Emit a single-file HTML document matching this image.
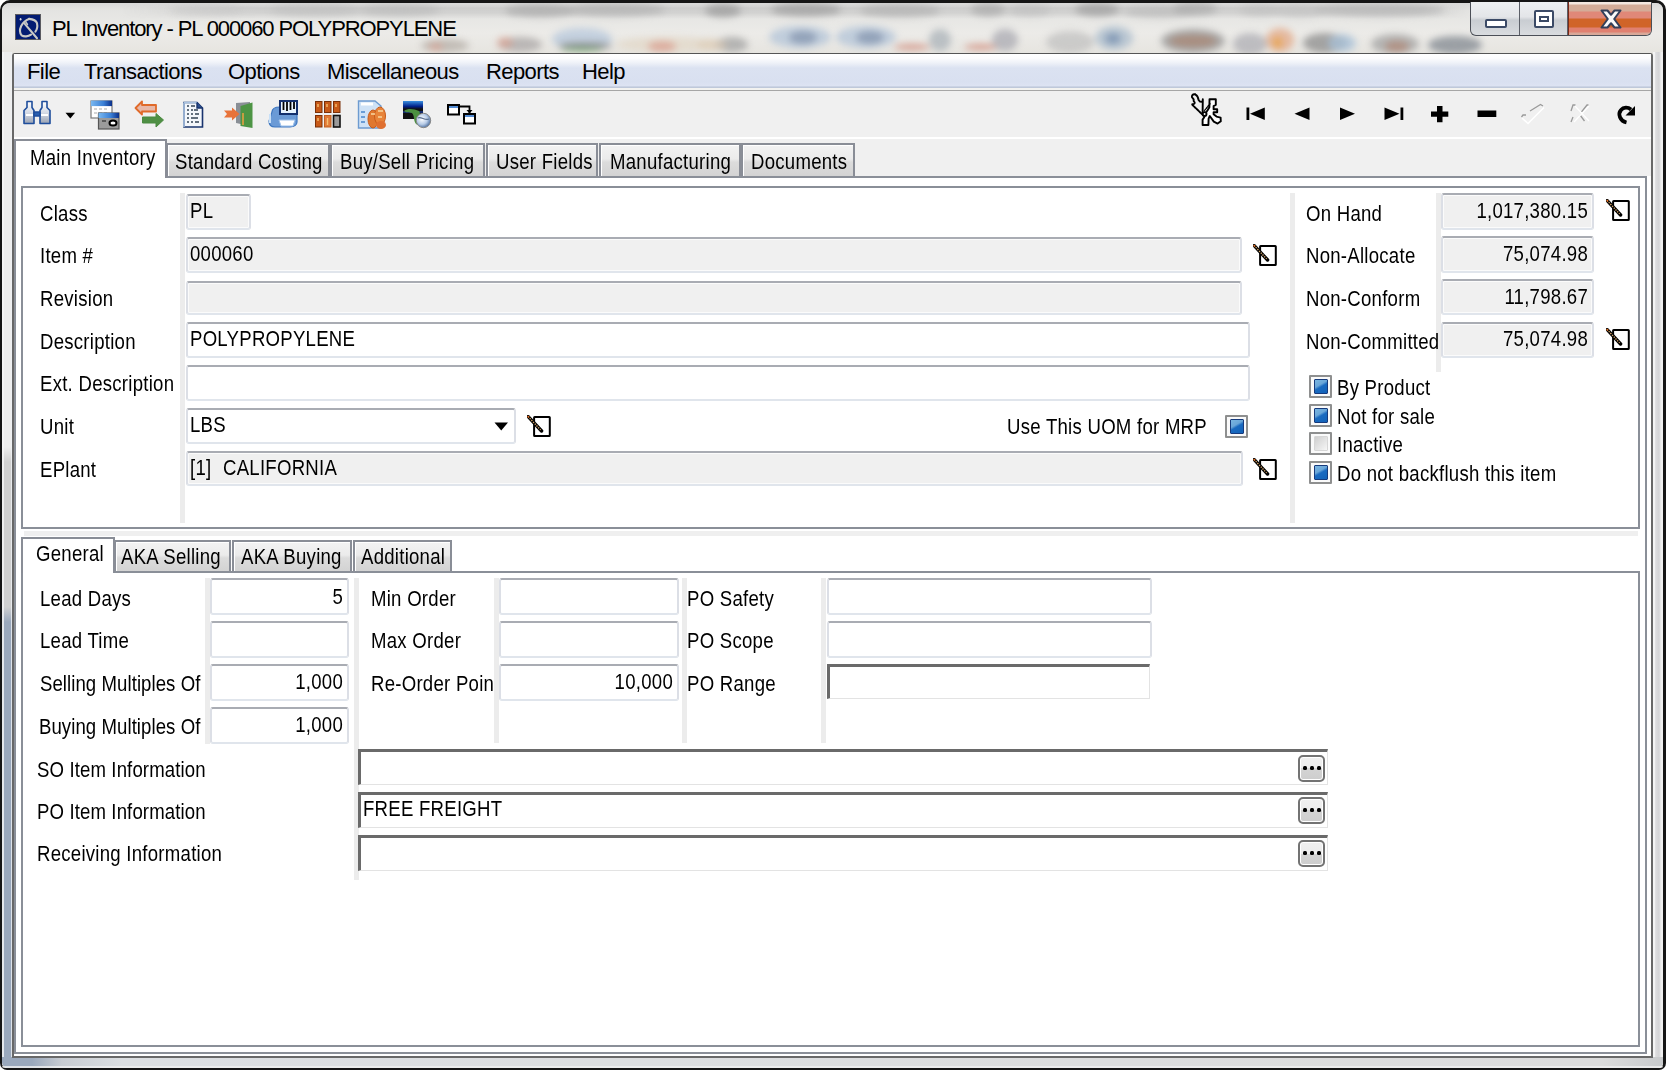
<!DOCTYPE html>
<html><head><meta charset="utf-8">
<style>
*{box-sizing:border-box}
html,body{margin:0;padding:0;width:1666px;height:1070px;overflow:hidden;background:#1a1a1a}
body{position:relative;font-family:"Liberation Sans",sans-serif}
.a{position:absolute}
.t{position:absolute;font-size:22px;line-height:22px;letter-spacing:0.3px;margin-top:-1px;transform:scaleX(0.845);transform-origin:0 0;white-space:nowrap;color:#000}
.r{text-align:right;transform-origin:100% 0}
.box{position:absolute;background:#fff;border-radius:3px;border:2px solid #e0e5ec;border-top-color:#a9acb3;border-left-color:#dcdfe6;border-right-color:#dcdfe6}
.rbox{position:absolute;background:#f0f0f0;border-radius:3px;border:2px solid #e0e5ec;border-top-color:#a9acb3;border-left-color:#dcdfe6;border-right-color:#dcdfe6;box-shadow:inset 0 0 0 1px #fbfbfb}
.sunk{position:absolute;background:#fff;border-style:solid;border-width:3px 1px 1px 3px;border-color:#6a6a6a #e3e3e3 #e3e3e3 #6a6a6a}
.sep{position:absolute;background:#ececec}
.tab{position:absolute;border:2px solid #898d96;border-bottom:none;background:linear-gradient(#f3f3f3 0%,#ebebeb 45%,#dcdcdc 55%,#d3d3d3 100%);box-shadow:inset 1px 1px 0 #fff}
.tabA{position:absolute;border:2px solid #898d96;border-bottom:none;background:#fff}
.cb{position:absolute;width:23px;height:23px;border:2px solid #8e8f8f;border-radius:1px;background:#fafafa;padding:2px 2px 2px 2.5px}
.cb i{display:block;width:100%;height:100%;border:1.5px solid #163a7c;border-radius:1px;background:linear-gradient(150deg,#7ab6e2 0%,#6aa6d8 38%,#1a6ac0 52%,#1262b8 100%)}
.cb.off i{border-color:#d6d6d6;background:linear-gradient(135deg,#cfcfcf,#f6f6f6)}
.menu{position:absolute;font-size:22px;line-height:22px;letter-spacing:-0.6px;white-space:nowrap;color:#000;margin-top:-2px}
</style></head>
<body>
<!-- window frame -->
<div class="a" style="left:0;top:0;width:1666px;height:1070px;background:#fff"></div>
<div class="a" id="frame" style="left:0;top:0;width:1666px;height:1070px;border:3px solid #151515;border-width:3px 3px 2px 2px;border-radius:10px 10px 7px 7px;background:linear-gradient(90deg,#f5f5f5 0px,#f5f5f5 0px,#d2d2d2 2px,#d2d2d2 8px,#efefef 8px,#efefef 10px,#efefef 1651px,#c6c6c9 1652px,#c2c3c6 1657px,#f0f0f0 1658px);overflow:hidden">
  <!-- title glass -->
  <div class="a" style="left:0;top:0;width:1661px;height:52px;background:linear-gradient(#d8d8d8 0px,#e4e4e2 8px,#ecebe8 30px,#e6e4df 52px)"></div>
  <div class="a" style="left:118px;top:1px;width:1350px;height:16px;background:linear-gradient(#fff0 0px,#bdbdbd 4px,#c4c4c4 9px,#fff0 15px);opacity:.55;-webkit-mask-image:linear-gradient(90deg,transparent 0,#000 120px,#000 1300px,transparent 1350px)"></div>
  <div class="a" id="blobs" style="left:418px;top:0px;width:1241px;height:49px;overflow:visible;filter:blur(3.5px)">
<div class="a" style="left:-150px;top:1px;width:90px;height:12px;background:#bdbdbd;opacity:.6;border-radius:50%"></div>
<div class="a" style="left:-60px;top:1px;width:80px;height:12px;background:#b8b8b8;opacity:.6;border-radius:50%"></div>
<div class="a" style="left:-250px;top:2px;width:70px;height:10px;background:#c4c4c4;opacity:.5;border-radius:50%"></div>
<div class="a" style="left:85.0px;top:0.5px;width:70px;height:13px;background:#a8a8a8;opacity:0.68;border-radius:50%"></div>
<div class="a" style="left:145.0px;top:-0.5px;width:100px;height:13px;background:#b0b0b0;opacity:0.68;border-radius:50%"></div>
<div class="a" style="left:285.0px;top:0.5px;width:36px;height:13px;background:#9c9c9c;opacity:0.77;border-radius:50%"></div>
<div class="a" style="left:351.0px;top:-0.5px;width:70px;height:13px;background:#a0a0a0;opacity:0.77;border-radius:50%"></div>
<div class="a" style="left:440.0px;top:0.5px;width:80px;height:13px;background:#b0b0b0;opacity:0.68;border-radius:50%"></div>
<div class="a" style="left:551.0px;top:-0.5px;width:34px;height:13px;background:#a8a8a8;opacity:0.68;border-radius:50%"></div>
<div class="a" style="left:655.0px;top:-0.5px;width:44px;height:13px;background:#a0a0a0;opacity:0.77;border-radius:50%"></div>
<div class="a" style="left:705.0px;top:3.0px;width:70px;height:12px;background:#b8b8b8;opacity:0.59;border-radius:50%"></div>
<div class="a" style="left:753.0px;top:-1.5px;width:44px;height:13px;background:#a8a8a8;opacity:0.68;border-radius:50%"></div>
<div class="a" style="left:855.0px;top:0.5px;width:50px;height:13px;background:#c0c0c0;opacity:0.59;border-radius:50%"></div>
<div class="a" style="left:895.0px;top:-0.5px;width:130px;height:13px;background:#b4b4b4;opacity:0.68;border-radius:50%"></div>
<div class="a" style="left:590.0px;top:1.0px;width:40px;height:12px;background:#bdbdbd;opacity:0.59;border-radius:50%"></div>
<div class="a" style="left:820.0px;top:1.0px;width:40px;height:12px;background:#bbbbbb;opacity:0.51;border-radius:50%"></div>
<div class="a" style="left:1.0px;top:35.5px;width:48px;height:13px;background:#b0a8a0;opacity:0.68;border-radius:50%"></div>
<div class="a" style="left:9.0px;top:40.0px;width:14px;height:8px;background:#d8a090;opacity:0.68;border-radius:50%"></div>
<div class="a" style="left:78.0px;top:33.5px;width:44px;height:15px;background:#a8a4a4;opacity:0.72;border-radius:50%"></div>
<div class="a" style="left:77.0px;top:33.5px;width:16px;height:11px;background:#d8a090;opacity:0.68;border-radius:50%"></div>
<div class="a" style="left:132.0px;top:25.0px;width:60px;height:22px;background:#b8c8dc;opacity:0.77;border-radius:50%"></div>
<div class="a" style="left:138.0px;top:39.0px;width:54px;height:8px;background:#858585;opacity:0.72;border-radius:50%"></div>
<div class="a" style="left:141.0px;top:45.0px;width:42px;height:3px;background:#4a9a40;opacity:0.77;border-radius:50%"></div>
<div class="a" style="left:196.0px;top:33.5px;width:104px;height:15px;background:#e2d6c4;opacity:0.68;border-radius:50%"></div>
<div class="a" style="left:228.0px;top:37.5px;width:28px;height:11px;background:#d89888;opacity:0.68;border-radius:50%"></div>
<div class="a" style="left:296.0px;top:33.5px;width:32px;height:15px;background:#a0a0a0;opacity:0.72;border-radius:50%"></div>
<div class="a" style="left:277.0px;top:36.0px;width:30px;height:12px;background:#dcc8b0;opacity:0.59;border-radius:50%"></div>
<div class="a" style="left:349.0px;top:23.0px;width:62px;height:22px;background:#b4c4d8;opacity:0.77;border-radius:50%"></div>
<div class="a" style="left:369.0px;top:27.5px;width:28px;height:13px;background:#8494ae;opacity:0.77;border-radius:50%"></div>
<div class="a" style="left:416.0px;top:23.0px;width:60px;height:22px;background:#b4c4d8;opacity:0.77;border-radius:50%"></div>
<div class="a" style="left:436.0px;top:27.5px;width:28px;height:13px;background:#8494ae;opacity:0.77;border-radius:50%"></div>
<div class="a" style="left:474.0px;top:41.0px;width:36px;height:6px;background:#d08878;opacity:0.77;border-radius:50%"></div>
<div class="a" style="left:509.0px;top:26.0px;width:22px;height:22px;background:#a4acb4;opacity:0.68;border-radius:50%"></div>
<div class="a" style="left:544.0px;top:41.0px;width:34px;height:6px;background:#d08878;opacity:0.77;border-radius:50%"></div>
<div class="a" style="left:572.0px;top:26.0px;width:26px;height:22px;background:#a4a4ac;opacity:0.68;border-radius:50%"></div>
<div class="a" style="left:626.0px;top:28.0px;width:48px;height:22px;background:#bcbcbc;opacity:0.68;border-radius:50%"></div>
<div class="a" style="left:675.0px;top:23.0px;width:38px;height:24px;background:#acbccc;opacity:0.77;border-radius:50%"></div>
<div class="a" style="left:685.0px;top:29.5px;width:16px;height:11px;background:#7890b0;opacity:0.77;border-radius:50%"></div>
<div class="a" style="left:741.0px;top:26.0px;width:64px;height:24px;background:#959595;opacity:0.77;border-radius:50%"></div>
<div class="a" style="left:749.0px;top:32.0px;width:48px;height:12px;background:#a88878;opacity:0.85;border-radius:50%"></div>
<div class="a" style="left:813.0px;top:30.0px;width:34px;height:22px;background:#a8a8b0;opacity:0.68;border-radius:50%"></div>
<div class="a" style="left:846.0px;top:25.0px;width:28px;height:24px;background:#e2aa8a;opacity:0.77;border-radius:50%"></div>
<div class="a" style="left:852.5px;top:33.5px;width:9px;height:11px;background:#e8a040;opacity:0.77;border-radius:50%"></div>
<div class="a" style="left:883.0px;top:30.0px;width:44px;height:20px;background:#8e8e8e;opacity:0.77;border-radius:50%"></div>
<div class="a" style="left:908.0px;top:31.0px;width:28px;height:18px;background:#a8c0d8;opacity:0.77;border-radius:50%"></div>
<div class="a" style="left:951.0px;top:31.0px;width:48px;height:20px;background:#a0a0a0;opacity:0.72;border-radius:50%"></div>
<div class="a" style="left:965.0px;top:37.5px;width:24px;height:11px;background:#b08878;opacity:0.77;border-radius:50%"></div>
<div class="a" style="left:1008.0px;top:33.0px;width:54px;height:18px;background:#838a92;opacity:0.77;border-radius:50%"></div>
</div>
  <div class="a" style="left:0;top:1054px;width:1661px;height:14px;background:linear-gradient(#f2f2f2 0,#f2f2f2 2px,#dcdcdc 3px,#d8d8d8 10px,#f2f2f2 12px)"></div>
</div>
<!-- frame side glass -->
<div class="a" style="left:2px;top:52px;width:10px;height:1005px;background:linear-gradient(#eeeeee 0px,#eeeeee 395px,#d0d0d0 410px,#d0d0d0 555px,#9aa8bc 570px,#9aa8bc 1005px)"></div>
<div class="a" style="left:2px;top:52px;width:1.5px;height:1005px;background:#f6f6f6;opacity:.8"></div>
<div class="a" style="left:10.5px;top:52px;width:1.5px;height:1005px;background:#eef0f3;opacity:.8"></div>
<div class="a" style="left:1653px;top:52px;width:10px;height:1005px;background:linear-gradient(90deg,#f6f6f6 0px,#dcdcde 3px,#d4d4d6 6px,#ececec 8px)"></div>
<div class="a" style="left:1653px;top:52px;width:1.5px;height:1005px;background:#f4f4f4"></div>
<div class="a" style="left:1661px;top:52px;width:2px;height:1005px;background:#efefef"></div>
<div class="a" style="left:2px;top:1057px;width:1661px;height:11px;border-radius:0 0 6px 6px;background:linear-gradient(90deg,#9aa8bc 0px,#9aa8bc 30px,#c8ccd2 60px,#dcdfe2 120px,#dcdcdc 1600px,#c8cacc 1661px)"></div>
<div class="a" style="left:2px;top:1066px;width:1661px;height:2px;border-radius:0 0 6px 6px;background:#f0f0f0;opacity:.8"></div>
<!-- title icon -->
<div class="a" style="left:15px;top:14px;width:26px;height:26px;background:#031c72;border:1px solid #5a5a60"></div>
<svg class="a" style="left:15.5px;top:14.5px" width="25" height="25" viewBox="0 0 25 25"><g fill="none" stroke="#c9c9c6" stroke-width="2.1" stroke-linecap="round"><path d="M13 3.9 C16.5 4.2 20 5.2 21 8.2 C21.6 11 21.4 14 19.4 16.6"/><path d="M13 3.9 C10 5 6.8 7.8 5.2 11 C3.7 14.2 3.6 18 5.6 20.4 C8 22 12.2 21.6 15 19.6"/><path d="M8.6 8.6 L21 23.3"/><path d="M9.5 6.5 L11.5 9.5" stroke-width="1.4"/></g><ellipse cx="4.6" cy="4.3" rx="0.9" ry="1.3" fill="#d8d8d8"/></svg>
<div class="t" style="left:52px;top:19px;font-size:22px;letter-spacing:-1.1px;transform:none">PL Inventory - PL 000060 POLYPROPYLENE</div>

<!-- caption buttons -->
<div class="a" style="left:1470px;top:2px;width:182px;height:34px;border:1px solid #4b4f57;border-top:none;border-radius:0 0 6px 6px;overflow:hidden;background:linear-gradient(#eef0f2 0%,#e3e5e8 45%,#c9cdd2 55%,#d9dcdf 100%)">
  <div class="a" style="left:48px;top:0;width:1px;height:34px;background:#5c6068"></div>
  <div class="a" style="left:96px;top:0;width:1px;height:34px;background:#5c6068"></div>
  <div class="a" style="left:97px;top:0;width:85px;height:34px;background:linear-gradient(#f4e8e0 0px,#f4e8e0 2px,#d4ac98 3px,#d4ac98 9px,#e08878 10px,#e08878 16px,#d06428 17px,#d06428 25px,#e08070 26px,#e08070 30px,#d8a898 31px);border-left:1.5px solid #7a2a18"></div>
</div>
<div class="a" style="left:1485px;top:19px;width:22px;height:9px;background:#fff;border:2px solid #3b4a66;border-radius:2px"></div>
<div class="a" style="left:1534px;top:10px;width:20px;height:18px;background:#fff;border:2px solid #3b4a66;border-radius:2px"><div class="a" style="left:3px;top:4px;width:10px;height:6px;border:2px solid #3b4a66"></div></div>
<svg class="a" style="left:1598px;top:8px" width="26" height="22" viewBox="-3 -2 26 22"><path d="M0.5 0.5 H6.5 L10 4.8 L13.5 0.5 H19.5 L13.2 9 L19.5 17.5 H13.5 L10 13.2 L6.5 17.5 H0.5 L6.8 9 Z" fill="#fafafa" stroke="#33405a" stroke-width="2" stroke-linejoin="round"/></svg>

<!-- client area -->
<div class="a" style="left:12px;top:52.5px;width:1641px;height:1005.5px;border:2px solid #686868;border-top-color:#555;border-top-width:1.5px;border-radius:3px 3px 0 0;background:#f0f0f0"></div>
<!-- menubar -->
<div class="a" style="left:14px;top:54px;width:1637px;height:34px;background:linear-gradient(#fff 0px,#fdfdfe 4px,#eef1f8 9px,#dbe2f1 14px,#d9e0f0 28px,#dde3f2 32px,#b9c3d6 33px,#c4cddd 34px)"></div>
<div class="a" style="left:14px;top:88px;width:1637px;height:4px;background:linear-gradient(#f2f2f0 0,#f2f2f0 2px,#a6a6a6 2px,#a6a6a6 3.5px,#f0f0f0 3.5px)"></div>
<div class="menu" style="left:27px;top:63px">File</div>
<div class="menu" style="left:84px;top:63px">Transactions</div>
<div class="menu" style="left:228px;top:63px">Options</div>
<div class="menu" style="left:327px;top:63px">Miscellaneous</div>
<div class="menu" style="left:486px;top:63px">Reports</div>
<div class="menu" style="left:582px;top:63px">Help</div>
<!-- toolbar -->
<div class="a" style="left:14px;top:91px;width:1637px;height:46px;background:#f0f0f0"></div>
<div class="a" style="left:14px;top:137px;width:1637px;height:1.5px;background:#fff"></div>

<svg class="a" style="left:0;top:0" width="1666" height="140" viewBox="0 0 1666 140">
<defs>
<linearGradient id="gb" x1="0" y1="0" x2="0" y2="1"><stop offset="0" stop-color="#fff"/><stop offset=".5" stop-color="#d5dbe6"/><stop offset="1" stop-color="#9aa3b3"/></linearGradient>
<linearGradient id="tbar" x1="0" y1="0" x2="1" y2="0"><stop offset="0" stop-color="#7ab8f0"/><stop offset=".6" stop-color="#3a7fd5"/><stop offset="1" stop-color="#0a2f8a"/></linearGradient>
<linearGradient id="dkw" x1="0" y1="0" x2="0" y2="1"><stop offset="0" stop-color="#3a90e0"/><stop offset=".3" stop-color="#00208a"/><stop offset=".45" stop-color="#111"/><stop offset="1" stop-color="#111"/></linearGradient>
<radialGradient id="globe" cx=".4" cy=".4" r=".6"><stop offset="0" stop-color="#fff"/><stop offset=".6" stop-color="#b9cde8"/><stop offset="1" stop-color="#5a7aa8"/></radialGradient>
</defs>
<!-- binoculars -->
<g stroke="#1f4e9c" stroke-width="1.6" stroke-linejoin="round">
<path d="M27 101.5 h5 v6 l2 3 v13 h-10 v-13 l3 -3 z" fill="url(#gb)"/>
<path d="M42 101.5 h5 v6 l3 3 v13 h-10 v-13 l2 -3 z" fill="url(#gb)"/>
<path d="M34 112 h6 v4 h-6 z" fill="#2a5fb0"/>
</g>
<path d="M26 115 h7 M41 115 h7" stroke="#fff" stroke-width="2"/>
<path d="M65.5 112.8 h9.6 l-4.8 5.6 z" fill="#000"/>
<!-- windows icon -->
<rect x="91" y="101" width="21" height="17" fill="#fff" stroke="#7a7a7a" stroke-width="1.2"/>
<rect x="91" y="100.6" width="21" height="5.5" fill="url(#tbar)"/>
<path d="M94 109 h3 M99 109 h3 M104 109 h3 M94 113 h3 M99 113 h3 M104 113 h3" stroke="#aaa" stroke-width="1.2"/>
<rect x="98.5" y="113" width="20.5" height="16" fill="#9b9b9b" stroke="#555" stroke-width="1.2"/>
<rect x="98.5" y="112.8" width="20.5" height="5.2" fill="url(#tbar)"/>
<ellipse cx="113" cy="123" rx="3.5" ry="2.5" fill="#fff" stroke="#000" stroke-width="2"/>
<path d="M102 121 h4" stroke="#444" stroke-width="1.5"/>
<!-- arrows -->
<path d="M135.5 108 L142 101.5 V105 H156 V111.5 H142 V114.5 Z" fill="#e8b8a8" stroke="#e06a2a" stroke-width="1.8" stroke-linejoin="round"/>
<path d="M163.5 120 L156 113.5 V117 H142.5 V123 H156 V127 Z" fill="#4f8f44" stroke="#4a8a40" stroke-width="1"/>
<!-- document -->
<path d="M184 102.5 H197 L202.5 108 V127 H184 Z" fill="#f4f7fb" stroke="#19346e" stroke-width="1.6"/>
<path d="M184 102.5 H197 M184 102.5 V127" stroke="#a9c2e0" stroke-width="1.6"/>
<path d="M197 102.5 V108 H202.5" fill="#2c4f8f" stroke="#19346e" stroke-width="1.4"/>
<path d="M187 106 h2 M191 106 h4 M187 110 h2 M191 110 h2 M194 110 h4 M187 114 h2 M191 114 h2 M195 114 h4 M187 118 h2 M191 118 h7 M187 122 h2 M191 122 h2 M195 122 h4" stroke="#345" stroke-width="1.3"/>
<!-- door -->
<path d="M236 103 L250 102 V126 L236 123 Z" fill="#8a8f96"/>
<path d="M240.5 106 L252.5 102.5 V128 L240.5 126 Z" fill="#4d9444"/>
<path d="M243 113 V125" stroke="#f0a040" stroke-width="1.5"/>
<path d="M224 110.5 H232 V107.5 L239.5 114 L232 120.5 V117.5 H224 L227 114 Z" fill="#e8733a"/>
<!-- printer -->
<path d="M272 112 C272 108 276 107 280 107 H292 C296 107 297 110 297 114 V122 C297 125 294 127 290 127 H275 C271 127 269 125 269 121 Z" fill="#6a9ad6" stroke="#3e77c0" stroke-width="1.2"/>
<path d="M270 114 V123" stroke="#c8e0f8" stroke-width="2"/>
<rect x="280" y="101" width="17" height="13" fill="#e8f4ff" stroke="#13306e" stroke-width="2"/>
<path d="M283.5 102 V110 M287 102 V111 M290.5 102 V110 M294 102 V109" stroke="#000" stroke-width="1.8"/>
<path d="M279 120 H295 L293 126 H281 Z" fill="#fff" stroke="#9cc0ea" stroke-width="1"/>
<!-- grid -->
<g stroke="#7a3008" stroke-width="1">
<rect x="315.5" y="101.5" width="6.5" height="11" fill="#c85a18"/>
<rect x="324.5" y="101.5" width="6.5" height="11" fill="#c85a18"/>
<rect x="333.5" y="101.5" width="6.5" height="11" fill="#c85a18"/>
<rect x="315.5" y="115.5" width="6.5" height="11.5" fill="#c85a18"/>
<rect x="324.5" y="115.5" width="6.5" height="11.5" fill="#e27a38" stroke="#c06020"/>
<rect x="333.5" y="115.5" width="6.5" height="11.5" fill="#9a9a9a" stroke="#111" stroke-width="1.6"/>
</g>
<path d="M318 104 v3 M327 104 v3 M336 104 v3 M318 118 v3 M327.5 118 v7" stroke="#f5c070" stroke-width="1.4"/>
<!-- report with coins -->
<path d="M358.5 101 H375 L381 106 V128 H358.5 Z" fill="#cfe2f6" stroke="#6d9bd0" stroke-width="1.4"/>
<path d="M361 104 H373" stroke="#fff" stroke-width="3"/>
<path d="M361 112 h4 M361 117 h4 M361 122 h4" stroke="#4a86cc" stroke-width="1.4"/>
<ellipse cx="373" cy="119" rx="5" ry="9" fill="#e07830" stroke="#c85a18" stroke-width="1"/>
<ellipse cx="380" cy="116" rx="5.5" ry="9" fill="#e8843a" stroke="#c85a18" stroke-width="1"/>
<ellipse cx="381" cy="125" rx="5" ry="4" fill="#e07030"/>
<path d="M371 114 h4 M378 111 h5 M378 117 h4" stroke="#f8d8a0" stroke-width="1.4"/>
<!-- dark window + globe -->
<rect x="403" y="101" width="20" height="18" fill="url(#dkw)"/>
<path d="M403 112 h20" stroke="#1a3ea8" stroke-width="1.2"/>
<path d="M404 111 C408 108 414 109 419 111 C421 113 419 116 420 121 C421 124 418 126 416 124 C413 120 415 116 412 113 C409 112 406 113 404 111 Z" fill="#4c9040"/>
<circle cx="423.5" cy="120.5" r="7.2" fill="url(#globe)" stroke="#888" stroke-width="1"/>
<path d="M418 118 C421 116 425 121 429 119" stroke="#5a6f8f" stroke-width="1.2" fill="none"/>
<!-- linked windows -->
<rect x="448" y="105" width="11" height="9.5" fill="#fff" stroke="#000" stroke-width="2"/>
<path d="M449 107 h9" stroke="#2a70c8" stroke-width="1.6"/>
<path d="M459 106.5 H469.5 V113" stroke="#000" stroke-width="1.8" fill="none"/>
<path d="M466.5 110 h6 l-3 3.5 z" fill="#000"/>
<rect x="464" y="114" width="11" height="9.5" fill="#fff" stroke="#000" stroke-width="2"/>
<path d="M465 116 h9" stroke="#2a70c8" stroke-width="1.6"/>
<!-- wand/figure -->
<g fill="none" stroke="#000" stroke-width="1.9" stroke-linejoin="round" stroke-linecap="round">
<path d="M1195 94.3 C1192.5 94 1191.5 95.5 1192 97.3 C1193.5 98.5 1194 99.8 1193.7 101.3 C1195.5 102.5 1195 104.3 1192.3 104.3"/>
<path d="M1192.5 105 L1204 116" stroke-dasharray="1.6 0.7"/>
<path d="M1195.5 94.6 C1197.5 95.5 1198.2 98 1198.6 100 L1199.8 101.5 L1202.2 101.8"/>
<path d="M1202.8 99.3 L1202.6 113.5"/>
<path d="M1209.5 99.3 H1215.8 V104.8 L1213.6 106 V109.2 H1217.2 V112.3 H1213.6 V114.3 L1216.5 116.6 L1220.6 117.6 L1220.8 121.2 L1217.6 123.6 L1213.8 121.6 L1209.8 116 L1208.6 118.6 L1208.4 125 H1202.6 V119.6 L1204.2 117.2 L1205.2 113.8 L1207.6 110.2 L1209.4 107.2 Z" fill="#fff"/>
<path d="M1210 103.8 L1204.3 110.8" stroke-width="1.3" stroke-dasharray="1.3 0.9"/>
<circle cx="1204.6" cy="114" r="1.9" fill="#fff"/>
</g>
<!-- nav -->
<path d="M1246.5 107.5 h2.8 v12.5 h-2.8 z M1250 113.8 L1264.8 107.5 V120 Z" fill="#000"/>
<path d="M1294.5 113.8 L1309.5 107.5 V120 Z" fill="#000"/>
<path d="M1355 113.8 L1340 107.5 V120 Z" fill="#000"/>
<path d="M1400.5 107.5 h2.8 v12.5 h-2.8 z M1399.5 113.8 L1384.5 107.5 V120 Z" fill="#000"/>
<path d="M1437 106 h5.5 v5.5 h5.8 v5.2 h-5.8 v5.5 h-5.5 v-5.5 h-6 v-5.2 h6 z" fill="#000"/>
<rect x="1477.5" y="110.5" width="18.8" height="6.5" fill="#000"/>
<path d="M1521.5 117 L1523 115 L1526 115 M1530 111 L1540.5 104.5 L1543 106" stroke="#9a9a9a" stroke-width="1.3" fill="none"/>
<path d="M1522 118 L1528 123.5 L1544 107.5" stroke="#fff" stroke-width="1.5" fill="none"/>
<path d="M1571 111 L1573 105 L1575.5 105 M1581.5 112 L1587 105 L1588.5 105 M1571 122 L1573 117 M1580 115 L1584.5 121" stroke="#9a9a9a" stroke-width="1.3" fill="none"/>
<path d="M1575 106 L1589 121 M1589 106 L1574 122" stroke="#fff" stroke-width="1.2" fill="none"/>
<path d="M1626.5 122.5 C1620 121 1617.5 114 1621 110 C1623.5 107 1628 107 1631 109.5" stroke="#000" stroke-width="3.8" fill="none"/>
<path d="M1635 106 V115.5 H1625.5 Z" fill="#000"/>
</svg>


<!-- main tab control -->
<div class="a" style="left:14px;top:176px;width:1637px;height:880px;background:#fff"></div>
<div class="a" style="left:14px;top:176px;width:1633px;height:878px;border:2px solid #8a8f98;background:#fff"></div>

<!-- top tabs -->
<div class="tab" style="left:166px;top:143px;width:164px;height:33px"></div>
<div class="tab" style="left:330px;top:143px;width:155px;height:33px"></div>
<div class="tab" style="left:486px;top:143px;width:112px;height:33px"></div>
<div class="tab" style="left:599px;top:143px;width:142px;height:33px"></div>
<div class="tab" style="left:741px;top:143px;width:114px;height:33px"></div>
<div class="tabA" style="left:14px;top:139px;width:153px;height:39px"></div>
<div class="t" style="left:30px;top:148px">Main Inventory</div>
<div class="t" style="left:175px;top:152px">Standard Costing</div>
<div class="t" style="left:340px;top:152px">Buy/Sell Pricing</div>
<div class="t" style="left:496px;top:152px">User Fields</div>
<div class="t" style="left:610px;top:152px">Manufacturing</div>
<div class="t" style="left:751px;top:152px">Documents</div>


<!-- upper panel -->
<div class="a" style="left:21px;top:186px;width:1619px;height:343px;border:2px solid #8a8f98;background:#fff"></div>
<div class="a" style="left:24px;top:531px;width:1614px;height:5px;background:#efefef"></div>
<div class="sep" style="left:180px;top:193px;width:5px;height:330px"></div>
<div class="sep" style="left:1290px;top:193px;width:5px;height:330px"></div>
<div class="sep" style="left:1436px;top:193px;width:5px;height:179px"></div>
<div class="t" style="left:40px;top:203.5px">Class</div>
<div class="t" style="left:40px;top:246px">Item #</div>
<div class="t" style="left:40px;top:289px">Revision</div>
<div class="t" style="left:40px;top:331.5px">Description</div>
<div class="t" style="left:40px;top:374px">Ext. Description</div>
<div class="t" style="left:40px;top:417px">Unit</div>
<div class="t" style="left:40px;top:460px">EPlant</div>
<div class="rbox" style="left:186px;top:194px;width:65px;height:36px"></div>
<div class="rbox" style="left:186px;top:237px;width:1056px;height:36px"></div>
<div class="rbox" style="left:186px;top:281px;width:1056px;height:34px"></div>
<div class="box" style="left:186px;top:322px;width:1064px;height:36px"></div>
<div class="box" style="left:186px;top:365px;width:1064px;height:36px"></div>
<div class="box" style="left:186px;top:408px;width:330px;height:36px"></div>
<div class="rbox" style="left:186px;top:451px;width:1057px;height:35px"></div>
<div class="t" style="left:190px;top:201px">PL</div>
<div class="t" style="left:190px;top:243.5px">000060</div>
<div class="t" style="left:190px;top:329px">POLYPROPYLENE</div>
<div class="t" style="left:190px;top:414.5px">LBS</div>
<div class="t" style="left:190px;top:457.5px">[1]</div><div class="t" style="left:223px;top:457.5px">CALIFORNIA</div>
<svg class="a" style="left:494px;top:422px" width="15" height="9" viewBox="0 0 15 9"><path d="M0.5 0.5 H14 L7.25 8.5 Z" fill="#000"/></svg>
<svg class="a" style="left:1253px;top:244px" width="25" height="24" viewBox="0 0 25 24"><rect x="7.1" y="2" width="15.7" height="19.1" rx="0.6" fill="none" stroke="#000" stroke-width="2"/><path d="M1.2 1.6 L14.6 16" stroke="#000" stroke-width="3.4" stroke-linecap="round"/><path d="M1 1.4 L13.6 14.9" stroke="#dca868" stroke-width="1.3" stroke-dasharray="1.3 1.2"/><circle cx="1.4" cy="1.7" r="1" fill="#e06a20"/></svg>
<svg class="a" style="left:1253px;top:458px" width="25" height="24" viewBox="0 0 25 24"><rect x="7.1" y="2" width="15.7" height="19.1" rx="0.6" fill="none" stroke="#000" stroke-width="2"/><path d="M1.2 1.6 L14.6 16" stroke="#000" stroke-width="3.4" stroke-linecap="round"/><path d="M1 1.4 L13.6 14.9" stroke="#dca868" stroke-width="1.3" stroke-dasharray="1.3 1.2"/><circle cx="1.4" cy="1.7" r="1" fill="#e06a20"/></svg>
<svg class="a" style="left:527px;top:415px" width="25" height="24" viewBox="0 0 25 24"><rect x="7.1" y="2" width="15.7" height="19.1" rx="0.6" fill="none" stroke="#000" stroke-width="2"/><path d="M1.2 1.6 L14.6 16" stroke="#000" stroke-width="3.4" stroke-linecap="round"/><path d="M1 1.4 L13.6 14.9" stroke="#dca868" stroke-width="1.3" stroke-dasharray="1.3 1.2"/><circle cx="1.4" cy="1.7" r="1" fill="#e06a20"/></svg>
<div class="t" style="left:1007px;top:417px">Use This UOM for MRP</div>
<div class="cb" style="left:1225px;top:415px"><i></i></div>
<div class="t" style="left:1306px;top:203.5px">On Hand</div>
<div class="t" style="left:1306px;top:246px">Non-Allocate</div>
<div class="t" style="left:1306px;top:289px">Non-Conform</div>
<div class="t" style="left:1306px;top:331.5px">Non-Committed</div>
<div class="rbox" style="left:1441px;top:193px;width:153px;height:37px"></div>
<div class="rbox" style="left:1441px;top:236px;width:153px;height:37px"></div>
<div class="rbox" style="left:1441px;top:279px;width:153px;height:36px"></div>
<div class="rbox" style="left:1441px;top:322px;width:153px;height:36px"></div>
<div class="t r" style="left:1400px;width:188px;top:201px">1,017,380.15</div>
<div class="t r" style="left:1400px;width:188px;top:243.5px">75,074.98</div>
<div class="t r" style="left:1400px;width:188px;top:286.5px">11,798.67</div>
<div class="t r" style="left:1400px;width:188px;top:329px">75,074.98</div>
<svg class="a" style="left:1606px;top:199px" width="25" height="24" viewBox="0 0 25 24"><rect x="7.1" y="2" width="15.7" height="19.1" rx="0.6" fill="none" stroke="#000" stroke-width="2"/><path d="M1.2 1.6 L14.6 16" stroke="#000" stroke-width="3.4" stroke-linecap="round"/><path d="M1 1.4 L13.6 14.9" stroke="#dca868" stroke-width="1.3" stroke-dasharray="1.3 1.2"/><circle cx="1.4" cy="1.7" r="1" fill="#e06a20"/></svg>
<svg class="a" style="left:1606px;top:328px" width="25" height="24" viewBox="0 0 25 24"><rect x="7.1" y="2" width="15.7" height="19.1" rx="0.6" fill="none" stroke="#000" stroke-width="2"/><path d="M1.2 1.6 L14.6 16" stroke="#000" stroke-width="3.4" stroke-linecap="round"/><path d="M1 1.4 L13.6 14.9" stroke="#dca868" stroke-width="1.3" stroke-dasharray="1.3 1.2"/><circle cx="1.4" cy="1.7" r="1" fill="#e06a20"/></svg>
<div class="cb" style="left:1309px;top:375px"><i></i></div>
<div class="cb" style="left:1309px;top:404px"><i></i></div>
<div class="cb off" style="left:1309px;top:432px"><i></i></div>
<div class="cb" style="left:1309px;top:461px"><i></i></div>
<div class="t" style="left:1337px;top:378px">By Product</div>
<div class="t" style="left:1337px;top:406.7px">Not for sale</div>
<div class="t" style="left:1337px;top:435.4px">Inactive</div>
<div class="t" style="left:1337px;top:464px">Do not backflush this item</div>


<!-- lower tab control -->
<div class="a" style="left:21px;top:571px;width:1619px;height:476px;border:2px solid #8a8f98;background:#fff"></div>
<div class="tab" style="left:114px;top:540px;width:117px;height:31px"></div>
<div class="tab" style="left:232px;top:540px;width:120px;height:31px"></div>
<div class="tab" style="left:353px;top:540px;width:99px;height:31px"></div>
<div class="tabA" style="left:21px;top:537px;width:94px;height:36px"></div>
<div class="t" style="left:36px;top:544px">General</div>
<div class="t" style="left:121px;top:547.3px">AKA Selling</div>
<div class="t" style="left:241px;top:547.3px">AKA Buying</div>
<div class="t" style="left:361px;top:547.3px">Additional</div>
<div class="sep" style="left:205px;top:578px;width:5px;height:166px"></div>
<div class="sep" style="left:354px;top:578px;width:5px;height:302px"></div>
<div class="sep" style="left:494px;top:578px;width:5px;height:165px"></div>
<div class="sep" style="left:682px;top:578px;width:5px;height:165px"></div>
<div class="sep" style="left:821px;top:578px;width:5px;height:165px"></div>
<div class="t" style="left:40px;top:588.5px">Lead Days</div>
<div class="t" style="left:40px;top:631px">Lead Time</div>
<div class="t" style="left:40px;top:673.5px;letter-spacing:0.08px">Selling Multiples Of</div>
<div class="t" style="left:38.5px;top:716.5px;letter-spacing:0.08px">Buying Multiples Of</div>
<div class="box" style="left:210px;top:578px;width:139px;height:37px"></div>
<div class="box" style="left:210px;top:621px;width:139px;height:37px"></div>
<div class="box" style="left:210px;top:664px;width:139px;height:37px"></div>
<div class="box" style="left:210px;top:707px;width:139px;height:37px"></div>
<div class="t r" style="left:250px;width:93px;top:586.5px">5</div>
<div class="t r" style="left:250px;width:93px;top:671.5px">1,000</div>
<div class="t r" style="left:250px;width:93px;top:714.5px">1,000</div>
<div class="t" style="left:371px;top:588.5px">Min Order</div>
<div class="t" style="left:371px;top:631px">Max Order</div>
<div class="t" style="left:371px;top:673.5px">Re-Order Poin</div>
<div class="box" style="left:499px;top:578px;width:180px;height:37px"></div>
<div class="box" style="left:499px;top:621px;width:180px;height:37px"></div>
<div class="box" style="left:499px;top:664px;width:180px;height:37px"></div>
<div class="t r" style="left:560px;width:113px;top:671.5px">10,000</div>
<div class="t" style="left:686.5px;top:588.5px">PO Safety</div>
<div class="t" style="left:686.5px;top:631px">PO Scope</div>
<div class="t" style="left:686.5px;top:673.5px">PO Range</div>
<div class="box" style="left:827px;top:578px;width:325px;height:37px"></div>
<div class="box" style="left:827px;top:621px;width:325px;height:37px"></div>
<div class="sunk" style="left:827px;top:664px;width:323px;height:35px"></div>
<div class="t" style="left:37px;top:759.5px;letter-spacing:0.15px">SO Item Information</div>
<div class="t" style="left:37px;top:802px;letter-spacing:0.15px">PO Item Information</div>
<div class="t" style="left:37px;top:844px">Receiving Information</div>
<div class="sunk" style="left:358px;top:749px;width:970px;height:36px"></div>
<div class="sunk" style="left:358px;top:792px;width:970px;height:36px"></div>
<div class="sunk" style="left:358px;top:835px;width:970px;height:36px"></div>
<div class="t" style="left:363px;top:798.8px">FREE FREIGHT</div>
<div class="a" style="left:1298px;top:755px;width:27px;height:27px;border:2px solid #737373;border-radius:5px;background:linear-gradient(#f0f0f0 0%,#ececec 50%,#d4d4d4 50%,#cdcdcd 100%);box-shadow:inset 0 0 0 1px #fff"><div class="a" style="left:3px;top:9px;width:3.6px;height:3.6px;background:#000;border-radius:1.5px"></div><div class="a" style="left:10px;top:9px;width:3.6px;height:3.6px;background:#000;border-radius:1.5px"></div><div class="a" style="left:17px;top:9px;width:3.6px;height:3.6px;background:#000;border-radius:1.5px"></div></div>
<div class="a" style="left:1298px;top:797px;width:27px;height:27px;border:2px solid #737373;border-radius:5px;background:linear-gradient(#f0f0f0 0%,#ececec 50%,#d4d4d4 50%,#cdcdcd 100%);box-shadow:inset 0 0 0 1px #fff"><div class="a" style="left:3px;top:9px;width:3.6px;height:3.6px;background:#000;border-radius:1.5px"></div><div class="a" style="left:10px;top:9px;width:3.6px;height:3.6px;background:#000;border-radius:1.5px"></div><div class="a" style="left:17px;top:9px;width:3.6px;height:3.6px;background:#000;border-radius:1.5px"></div></div>
<div class="a" style="left:1298px;top:840px;width:27px;height:27px;border:2px solid #737373;border-radius:5px;background:linear-gradient(#f0f0f0 0%,#ececec 50%,#d4d4d4 50%,#cdcdcd 100%);box-shadow:inset 0 0 0 1px #fff"><div class="a" style="left:3px;top:9px;width:3.6px;height:3.6px;background:#000;border-radius:1.5px"></div><div class="a" style="left:10px;top:9px;width:3.6px;height:3.6px;background:#000;border-radius:1.5px"></div><div class="a" style="left:17px;top:9px;width:3.6px;height:3.6px;background:#000;border-radius:1.5px"></div></div>

</body></html>
